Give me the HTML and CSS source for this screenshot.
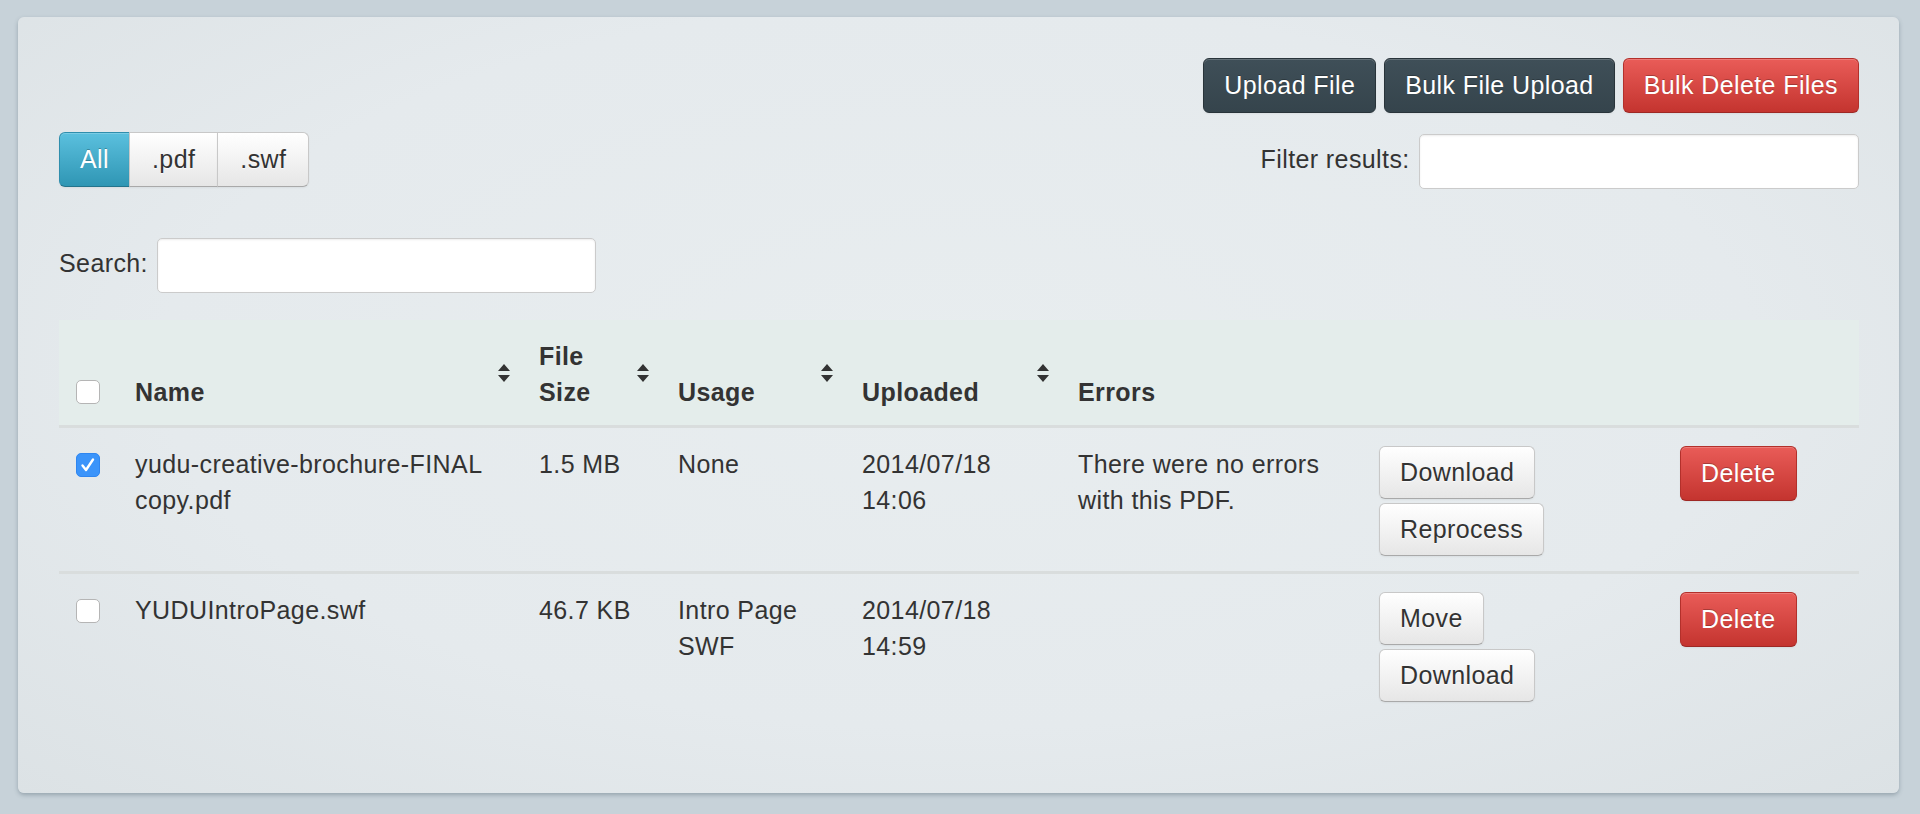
FILE: index.html
```html
<!DOCTYPE html>
<html lang="en">
<head>
  <meta charset="UTF-8" />
  <title>Files</title>
  <link rel="stylesheet" href="styles.css">
</head>
<body>
  <div class="panel">
    <!-- actions du haut -->
    <div class="toolbar">
      <button class="btn btn-dark">Upload File</button>
      <button class="btn btn-dark">Bulk File Upload</button>
      <button class="btn btn-danger">Bulk Delete Files</button>
    </div>

    <div class="filters">
      <div class="btn-group">
        <button class="btn btn-info">All</button>
        <button class="btn">.pdf</button>
        <button class="btn">.swf</button>
      </div>
      <label class="filter-field">Filter results: <input type="text"></label>
    </div>

    <div class="search">
      <label>Search: <input type="text"></label>
    </div>

    <table class="files">
      <colgroup>
        <col style="width:62px">
        <col style="width:404px">
        <col style="width:139px">
        <col style="width:184px">
        <col style="width:216px">
        <col style="width:301px">
        <col style="width:301px">
        <col>
      </colgroup>
      <thead>
        <tr>
          <th><span class="check"></span></th>
          <th class="sortable">Name</th>
          <th class="sortable">File<br>Size</th>
          <th class="sortable">Usage</th>
          <th class="sortable">Uploaded</th>
          <th>Errors</th>
          <th></th>
          <th></th>
        </tr>
      </thead>
      <tbody>
        <tr>
          <td><span class="check checked"></span></td>
          <td>yudu-creative-brochure-FINAL copy.pdf</td>
          <td>1.5 MB</td>
          <td>None</td>
          <td>2014/07/18<br>14:06</td>
          <td>There were no errors with this PDF.</td>
          <td class="actions">
            <button class="btn">Download</button>
            <button class="btn">Reprocess</button>
          </td>
          <td><button class="btn btn-danger">Delete</button></td>
        </tr>
        <tr>
          <td><span class="check"></span></td>
          <td>YUDUIntroPage.swf</td>
          <td>46.7 KB</td>
          <td>Intro Page<br>SWF</td>
          <td>2014/07/18<br>14:59</td>
          <td></td>
          <td class="actions">
            <button class="btn">Move</button>
            <button class="btn">Download</button>
          </td>
          <td><button class="btn btn-danger">Delete</button></td>
        </tr>
      </tbody>
    </table>
  </div>
</body>
</html>
```

FILE: styles.css
```css
* {
  box-sizing: border-box;
}
body {
  margin: 0;
  background: #c7d2d9;
  font-family: "Liberation Sans", Arial, sans-serif;
  font-size: 25px;
  letter-spacing: 0.4px;
  line-height: 36px;
  color: #333;
}

/* ===============================
   Carte principale
   =============================== */
.panel {
  margin: 17px 21px 21px 18px;
  height: 776px;
  padding: 41px 40px 40px 41px;
  border-radius: 6px;
  background: radial-gradient(ellipse at 50% 45%, #e8edef 0%, #e5eaed 60%, #dce2e5 100%);
  box-shadow: 0 2px 4px rgba(60, 80, 95, 0.35);
}

/* ===============================
   Boutons (style bootstrap 2)
   =============================== */
.btn {
  font: inherit;
  letter-spacing: inherit;
  line-height: 35px;
  padding: 8px 20px;
  border: 1px solid #c8c8c8;
  border-bottom-color: #a9a9a9;
  border-radius: 6px;
  color: #333;
  text-shadow: 0 1px 1px rgba(255, 255, 255, 0.75);
  background: linear-gradient(#ffffff, #e6e6e6);
  box-shadow: inset 0 1px 0 rgba(255, 255, 255, 0.2), 0 1px 2px rgba(0, 0, 0, 0.05);
  cursor: pointer;
  white-space: nowrap;
}
.btn-dark {
  color: #fff;
  text-shadow: 0 -1px 0 rgba(0, 0, 0, 0.25);
  background: linear-gradient(#3f4f58, #35444c);
  border-color: #29343a;
  padding: 9px 20px;
}
.btn-danger {
  color: #fff;
  text-shadow: 0 -1px 0 rgba(0, 0, 0, 0.25);
  background: linear-gradient(#e95c58, #c4342f);
  border-color: #b3302b #b3302b #9e2824;
  padding: 9px 20px;
}
.btn-info {
  color: #fff;
  text-shadow: 0 -1px 0 rgba(0, 0, 0, 0.25);
  background: linear-gradient(#5bc0de, #2f96b4);
  border-color: #2f8ead #2f8ead #24748c;
}

.toolbar {
  display: flex;
  justify-content: flex-end;
  gap: 8px;
}

.filters {
  display: flex;
  justify-content: space-between;
  align-items: flex-start;
  margin-top: 21px;
}
.btn-group {
  display: flex;
  margin-top: -2px;
}
.btn-group .btn {
  border-radius: 0;
  padding: 9px 22px;
  margin-left: -1px;
}
.btn-group .btn:first-child {
  border-radius: 6px 0 0 6px;
  margin-left: 0;
  padding: 9px 20px;
}
.btn-group .btn:last-child {
  border-radius: 0 6px 6px 0;
}

input[type="text"] {
  height: 55px;
  border: 1px solid #cbcbcb;
  border-radius: 5px;
  background: #fff;
  box-shadow: inset 0 1px 2px rgba(0, 0, 0, 0.08);
  vertical-align: middle;
  font: inherit;
  padding: 4px 10px;
}
.filter-field input {
  width: 440px;
  margin-left: 2px;
}
.search {
  margin-top: 49px;
}
.search input {
  width: 439px;
  margin-left: 2px;
}

/* ===============================
   Tableau des fichiers
   =============================== */
.files {
  width: 100%;
  margin-top: 27px;
  border-collapse: collapse;
  table-layout: fixed;
}
.files thead tr {
  background: #e4edeb;
}
.files th {
  text-align: left;
  font-weight: bold;
  vertical-align: bottom;
  padding: 18px 14px 15px;
  border-bottom: 3px solid #d9dddd;
}
.files th.sortable {
  background: url("data:image/svg+xml;utf8,<svg xmlns='http://www.w3.org/2000/svg' width='14' height='20' viewBox='0 0 14 20'><path d='M7 1 L13 8 L1 8 Z M1 12 L13 12 L7 19 Z' fill='%23333'/></svg>") no-repeat right 14px center;
}
.files td {
  vertical-align: top;
  padding: 18px 14px 11px;
}
.files tbody tr + tr td {
  border-top: 3px solid #d9dddd;
}
.files th:first-child,
.files td:first-child {
  padding-left: 17px;
}
.actions .btn {
  display: block;
  margin-bottom: 4px;
}

/* cases à cocher style mac */
.check {
  display: inline-block;
  width: 24px;
  height: 24px;
  border: 1px solid #b5b5b5;
  border-radius: 5px;
  background: #fff;
  vertical-align: middle;
  position: relative;
  top: -2px;
}
.files td .check {
  top: -1px;
}
.check.checked {
  border-color: #2f86f0;
  background: #3b94fa url("data:image/svg+xml;utf8,<svg xmlns='http://www.w3.org/2000/svg' width='24' height='24' viewBox='0 0 24 24'><path d='M6.5 12.5 L10 17 L17 6.5' fill='none' stroke='white' stroke-width='2.4' stroke-linecap='round' stroke-linejoin='round'/></svg>") no-repeat center;
}
```
